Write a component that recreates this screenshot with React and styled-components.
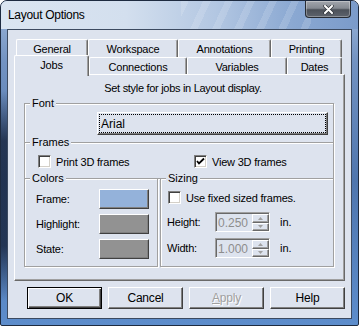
import React from 'react'
import styled, { createGlobalStyle } from 'styled-components'

const GlobalStyle = createGlobalStyle`
  html, body {
    margin: 0;
    padding: 0;
    background: #ffffff;
  }
  body {
    font-family: "Liberation Sans", Arial, sans-serif;
    font-size: 11px;
    color: #000;
  }
`

const FACE = '#dde3ee'

const Window = styled.div`
  width: 359px;
  height: 326px;
  box-sizing: border-box;
  display: flex;
  flex-direction: column;
  border: 1px solid #1e2b40;
  border-radius: 7px 7px 2px 2px;
  overflow: hidden;
  background:
    linear-gradient(180deg, rgba(18, 28, 50, 0) 0, rgba(18, 28, 50, 0) 90px, rgba(18, 28, 50, 0.75) 140px, rgba(18, 28, 50, 0.75) 245px, rgba(18, 28, 50, 0) 300px) left top / 7px 100% no-repeat,
    linear-gradient(180deg, #9fb8da 0, #7393c2 60px, #4f76ae 180px, #5d8dcc 326px);
`

const TitleBar = styled.div`
  height: 28px;
  flex: none;
  display: flex;
  align-items: flex-start;
  background:
    repeating-linear-gradient(115deg, rgba(255, 255, 255, 0.14) 0 7px, rgba(255, 255, 255, 0) 7px 20px) 180px 0 / 130px 100% no-repeat,
    linear-gradient(90deg, #dbe5f1 0, #d3dfee 35%, #b3c7e2 60%, #8aa8d2 82%, #7b9bca 100%);
`

const Title = styled.span`
  font-size: 12px;
  line-height: 28px;
  padding-left: 7px;
  letter-spacing: -0.3px;
  color: #000;
`

const CloseButton = styled.div`
  margin-left: auto;
  margin-right: 7px;
  width: 46px;
  height: 17px;
  box-sizing: border-box;
  display: flex;
  align-items: center;
  justify-content: center;
  border: 1px solid #262b33;
  border-top: none;
  border-radius: 0 0 4px 4px;
  background: linear-gradient(180deg, #a2a6ad 0, #858a92 45%, #4c5159 55%, #5d636c 100%);
  box-shadow: inset 0 0 0 1px rgba(255, 255, 255, 0.3);
`

const Client = styled.div`
  flex: 1;
  margin: 0 6px 6px 6px;
  background: ${FACE};
  border: 1px solid #3c4a60;
  display: flex;
  flex-direction: column;
  padding: 9px 6px 0 6px;
`

const TabRow = styled.div`
  display: flex;
  height: 18px;
  padding-left: 2px;
`

const Tab = styled.div`
  box-sizing: border-box;
  width: ${p => p.$w}px;
  height: ${p => (p.$active ? 21 : 18)}px;
  margin-top: ${p => (p.$active ? -2 : 0)}px;
  margin-left: ${p => (p.$active ? -2 : 0)}px;
  position: relative;
  z-index: ${p => (p.$active ? 2 : 0)};
  background: ${FACE};
  border-top: 1px solid #ffffff;
  border-left: 1px solid #ffffff;
  border-right: 1px solid #696969;
  border-radius: 2px 2px 0 0;
  box-shadow: inset -1px 0 0 #a0a0a0;
  display: flex;
  align-items: center;
  justify-content: center;
  padding-bottom: ${p => (p.$active ? 3 : 0)}px;
  letter-spacing: -0.2px;
`

const Panel = styled.div`
  box-sizing: border-box;
  height: 207px;
  flex: none;
  margin-top: -1px;
  position: relative;
  z-index: 1;
  border: 1px solid;
  border-color: #ffffff #696969 #696969 #ffffff;
  box-shadow: inset -1px -1px 0 #a0a0a0;
  display: flex;
  flex-direction: column;
  padding: 7px 10px 0 9px;
`

const Caption = styled.div`
  line-height: 13px;
  text-align: center;
  letter-spacing: -0.3px;
  padding-left: 8px;
`

const Group = styled.fieldset`
  margin: ${p => p.$top}px 0 0 0;
  padding: ${p => p.$pad};
  border: 1px solid #a0a0a0;
  box-shadow: inset 1px 1px 0 #ffffff, 1px 1px 0 #ffffff;
  min-width: 0;
  flex: ${p => p.$flex || 'none'};
  width: ${p => (p.$w ? `${p.$w}px` : 'auto')};
  box-sizing: border-box;
`

const Legend = styled.legend`
  padding: 0 2px;
  line-height: 13px;
  background: ${FACE};
`

const FontButton = styled.div`
  box-sizing: border-box;
  width: 231px;
  height: 23px;
  margin-left: 67px;
  border: 1px solid;
  border-color: #ffffff #404040 #404040 #ffffff;
  box-shadow: inset -1px -1px 0 #808080;
  display: flex;
  align-items: center;
  padding-left: 3px;
  font-size: 12px;
  outline: 1px dotted #000;
  outline-offset: -3px;
`

const CheckRow = styled.div`
  display: flex;
  align-items: center;
  height: 13px;
  margin-left: ${p => p.$ml || 0}px;
`

const CheckItem = styled.label`
  display: flex;
  align-items: center;
  gap: 5px;
  width: ${p => (p.$w ? `${p.$w}px` : 'auto')};
  letter-spacing: -0.2px;
`

const Box = styled.span`
  box-sizing: border-box;
  width: 13px;
  height: 13px;
  flex: none;
  background: #ffffff;
  border: 1px solid;
  border-color: #808080 #ffffff #ffffff #808080;
  box-shadow: inset 1px 1px 0 #404040, inset -1px -1px 0 #d4d0c8;
  display: flex;
  align-items: center;
  justify-content: center;
`

const BottomRow = styled.div`
  display: flex;
  gap: 2px;
  margin-top: -7px;
`

const ColorGrid = styled.div`
  display: grid;
  grid-template-columns: 69px 50px;
  grid-auto-rows: 20px;
  row-gap: 5px;
  align-items: center;
`

const FieldLabel = styled.span`
  padding-left: ${p => p.$pl || 0}px;
  letter-spacing: -0.2px;
`

const Swatch = styled.div`
  box-sizing: border-box;
  height: 20px;
  background: ${p => p.$color};
  border: 1px solid;
  border-color: #ffffff #404040 #404040 #ffffff;
  box-shadow: inset -1px -1px 0 #808080;
`

const SizeStack = styled.div`
  display: flex;
  flex-direction: column;
  gap: 8px;
`

const SpinRows = styled.div`
  display: flex;
  flex-direction: column;
  gap: 6px;
`

const SpinRow = styled.div`
  display: flex;
  align-items: center;
  height: 20px;
`

const SpinLabel = styled.span`
  width: 48px;
  padding-left: 1px;
  letter-spacing: -0.2px;
`

const SpinBox = styled.div`
  box-sizing: border-box;
  width: 55px;
  height: 20px;
  border: 1px solid;
  border-color: #a0a0a0 #ffffff #ffffff #a0a0a0;
  box-shadow: inset 1px 1px 0 #696969;
  display: flex;
  align-items: stretch;
  padding: 1px 0 0 1px;
`

const SpinValue = styled.span`
  flex: 1;
  display: flex;
  align-items: center;
  padding-left: 1px;
  color: #8d8d8d;
  font-size: 12px;
`

const SpinButtons = styled.div`
  width: 17px;
  display: flex;
  flex-direction: column;
`

const SpinArrow = styled.div`
  flex: 1;
  box-sizing: border-box;
  border: 1px solid;
  border-color: #ffffff #696969 #696969 #ffffff;
  box-shadow: inset -1px -1px 0 #a0a0a0;
  display: flex;
  align-items: center;
  justify-content: center;
`

const Unit = styled.span`
  margin-left: 10px;
`

const ButtonRow = styled.div`
  display: flex;
  justify-content: flex-end;
  gap: 6px;
  margin-top: 6px;
`

const Button = styled.div`
  box-sizing: border-box;
  width: 75px;
  height: 22px;
  display: flex;
  align-items: center;
  justify-content: center;
  border: 1px solid;
  border-color: ${p => (p.$default ? '#000 #000 #000 #000' : '#ffffff #404040 #404040 #ffffff')};
  box-shadow: ${p =>
    p.$default
      ? 'inset 1px 1px 0 #ffffff, inset -1px -1px 0 #404040, inset -2px -2px 0 #808080'
      : 'inset -1px -1px 0 #808080'};
  color: ${p => (p.$disabled ? '#a0a0a0' : '#000')};
  text-shadow: ${p => (p.$disabled ? '1px 1px 0 #ffffff' : 'none')};
  font-size: 12px;
  letter-spacing: -0.2px;
  u { text-decoration: underline; }
`

const Check = () => (
  <svg width="9" height="9" viewBox="0 0 9 9">
    <path d="M1 4 L3 6.5 L8 1.5" fill="none" stroke="#000" strokeWidth="1.8" />
  </svg>
)

const Arrow = ({ up }) => (
  <svg width="5" height="3" viewBox="0 0 5 3">
    <path d={up ? 'M0 3 L2.5 0 L5 3 Z' : 'M0 0 L2.5 3 L5 0 Z'} fill="#a0a0a0" />
  </svg>
)

const Spin = ({ value }) => (
  <SpinBox>
    <SpinValue>{value}</SpinValue>
    <SpinButtons>
      <SpinArrow><Arrow up /></SpinArrow>
      <SpinArrow><Arrow /></SpinArrow>
    </SpinButtons>
  </SpinBox>
)

const topTabs = [
  { label: 'General', w: 72 },
  { label: 'Workspace', w: 90 },
  { label: 'Annotations', w: 93 },
  { label: 'Printing', w: 71 },
]

const frontTabs = [
  { label: 'Jobs', w: 75, active: true },
  { label: 'Connections', w: 98 },
  { label: 'Variables', w: 100 },
  { label: 'Dates', w: 55 },
]

export default function App() {
  return (
    <>
      <GlobalStyle />
      <Window>
        <TitleBar>
          <Title>Layout Options</Title>
          <CloseButton>
            <svg width="11" height="9" viewBox="0 0 11 9">
              <path d="M2 1 L9 8 M9 1 L2 8" stroke="#2e3238" strokeWidth="3.4" strokeLinecap="round" />
              <path d="M2 1 L9 8 M9 1 L2 8" stroke="#ffffff" strokeWidth="2" strokeLinecap="round" />
            </svg>
          </CloseButton>
        </TitleBar>
        <Client>
          <TabRow>
            {topTabs.map(t => (
              <Tab key={t.label} $w={t.w}>{t.label}</Tab>
            ))}
          </TabRow>
          <TabRow>
            {frontTabs.map(t => (
              <Tab key={t.label} $w={t.w} $active={t.active}>{t.label}</Tab>
            ))}
          </TabRow>
          <Panel>
            <Caption>Set style for jobs in Layout display.</Caption>
            <Group $top={2} $pad="2px 5px 7px 5px">
              <Legend>Font</Legend>
              <FontButton>Arial</FontButton>
            </Group>
            <Group $top={-7} $pad="6px 5px 10px 5px">
              <Legend>Frames</Legend>
              <CheckRow $ml={8}>
                <CheckItem $w={156}>
                  <Box />
                  Print 3D frames
                </CheckItem>
                <CheckItem>
                  <Box><Check /></Box>
                  View 3D frames
                </CheckItem>
              </CheckRow>
            </Group>
            <BottomRow>
              <Group $top={0} $w={134} $pad="4px 5px 7px 5px">
                <Legend>Colors</Legend>
                <ColorGrid>
                  <FieldLabel $pl={6}>Frame:</FieldLabel>
                  <Swatch $color="#94b2da" />
                  <FieldLabel $pl={6}>Highlight:</FieldLabel>
                  <Swatch $color="#929292" />
                  <FieldLabel $pl={6}>State:</FieldLabel>
                  <Swatch $color="#929292" />
                </ColorGrid>
              </Group>
              <Group $top={0} $flex="1" $pad="6px 5px 8px 5px">
                <Legend>Sizing</Legend>
                <SizeStack>
                  <CheckRow $ml={2}>
                    <CheckItem>
                      <Box />
                      Use fixed sized frames.
                    </CheckItem>
                  </CheckRow>
                  <SpinRows>
                    <SpinRow>
                      <SpinLabel>Height:</SpinLabel>
                      <Spin value="0.250" />
                      <Unit>in.</Unit>
                    </SpinRow>
                    <SpinRow>
                      <SpinLabel>Width:</SpinLabel>
                      <Spin value="1.000" />
                      <Unit>in.</Unit>
                    </SpinRow>
                  </SpinRows>
                </SizeStack>
              </Group>
            </BottomRow>
          </Panel>
          <ButtonRow>
            <Button $default>OK</Button>
            <Button>Cancel</Button>
            <Button $disabled><span><u>A</u>pply</span></Button>
            <Button>Help</Button>
          </ButtonRow>
        </Client>
      </Window>
    </>
  )
}
